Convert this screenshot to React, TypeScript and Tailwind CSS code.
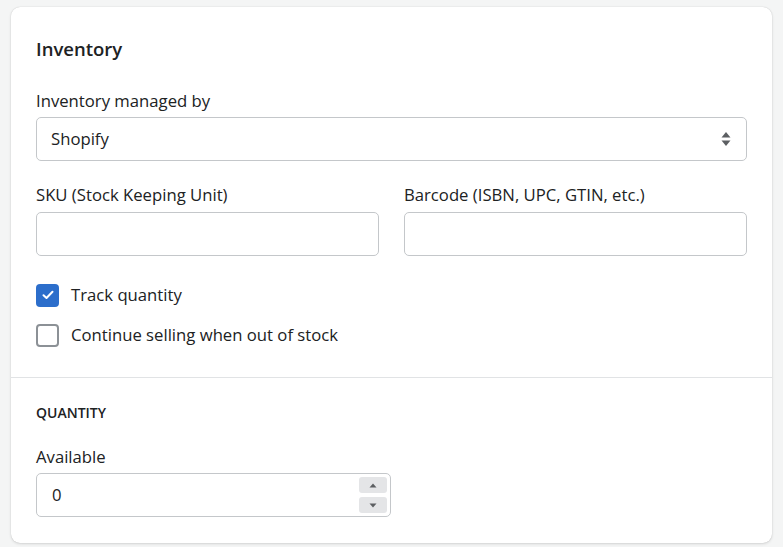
import React from "react";

function Field({ label, className = "" }: { label: string; className?: string }) {
  return (
    <div className={"flex flex-col " + className}>
      <label className="mb-[5px] text-[16.7px] leading-[24px] text-[#202223]">{label}</label>
      <div className="h-[44px] rounded-[5px] border border-[#c4c7ca] bg-white" />
    </div>
  );
}

export default function App() {
  return (
    <div
      className="min-h-[547px] w-[783px] bg-[#f4f5f5] pt-[7px] pl-[11px] pr-[11px] text-[#202223]"
      style={{ fontFamily: '"Open Sans", "Noto Sans", sans-serif' }}
    >
      <div className="h-[536px] rounded-[9px] bg-white shadow-[0_0_1px_rgba(0,0,0,0.2),0_1px_3px_rgba(0,0,0,0.12)]">
        <div className="px-[25px] pt-[28px] pb-[30px]">
          <h2 className="text-[18.5px] font-semibold leading-[27px]">Inventory</h2>

          <div className="mt-[27px] flex flex-col">
            <label className="mb-[4px] text-[16.7px] leading-[24px]">Inventory managed by</label>
            <div className="flex h-[44px] items-center justify-between rounded-[5px] border border-[#c4c7ca] bg-white pl-[14px] pr-[14px]">
              <span className="text-[16.7px]">Shopify</span>
              <svg width="12" height="18" viewBox="0 0 12 18">
                <path d="M6 2 L10.5 7.5 H1.5 Z" fill="#5c5f62" />
                <path d="M6 16 L10.5 10.5 H1.5 Z" fill="#5c5f62" />
              </svg>
            </div>
          </div>

          <div className="mt-[22px] grid grid-cols-2 gap-x-[25px]">
            <Field label="SKU (Stock Keeping Unit)" />
            <Field label="Barcode (ISBN, UPC, GTIN, etc.)" />
          </div>

          <div className="mt-[27px] flex flex-col gap-[16px]">
            <div className="flex items-center gap-[12px]">
              <span className="flex h-[23px] w-[23px] items-center justify-center rounded-[4px] bg-[#2c6ecb]">
                <svg width="12" height="10" viewBox="0 0 12 10">
                  <path d="M1.5 5.2 L4.5 8 L10.5 1.8" stroke="white" strokeWidth="2" fill="none" strokeLinecap="round" strokeLinejoin="round" />
                </svg>
              </span>
              <span className="text-[16.7px] leading-[24px]">Track quantity</span>
            </div>
            <div className="flex items-center gap-[12px]">
              <span className="h-[23px] w-[23px] rounded-[4px] border-2 border-[#8c9196] bg-white" />
              <span className="text-[16.7px] leading-[24px]">Continue selling when out of stock</span>
            </div>
          </div>
        </div>

        <div className="border-t border-[#e1e3e5] px-[25px] pt-[25px]">
          <h3 className="text-[14px] font-semibold uppercase leading-[20px]">Quantity</h3>
          <div className="mt-[22px] flex flex-col">
            <label className="mb-[4px] text-[16.7px] leading-[24px]">Available</label>
            <div className="flex h-[44px] w-[355px] items-center justify-between rounded-[5px] border border-[#c4c7ca] bg-white pl-[15px] pr-[3px]">
              <span className="text-[16.7px]">0</span>
              <div className="flex flex-col gap-[4px]">
                <span className="flex h-[16px] w-[28px] items-center justify-center rounded-[3px] bg-[#e4e5e7]">
                  <svg width="8" height="5" viewBox="0 0 8 5"><path d="M4 0.5 L7.5 4.5 H0.5 Z" fill="#5c5f62" /></svg>
                </span>
                <span className="flex h-[16px] w-[28px] items-center justify-center rounded-[3px] bg-[#e4e5e7]">
                  <svg width="8" height="5" viewBox="0 0 8 5"><path d="M4 4.5 L7.5 0.5 H0.5 Z" fill="#5c5f62" /></svg>
                </span>
              </div>
            </div>
          </div>
        </div>
      </div>
    </div>
  );
}
